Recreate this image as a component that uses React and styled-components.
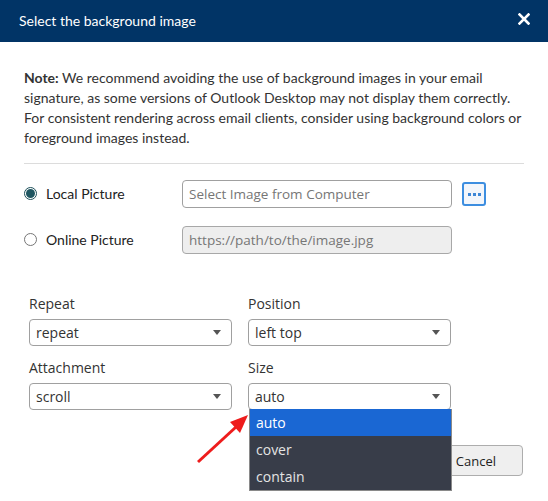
import React from "react";
import styled, { createGlobalStyle } from "styled-components";

const Global = createGlobalStyle`
  html, body { margin: 0; padding: 0; background: #ffffff; }
  body { font-family: Lato, "Noto Sans", sans-serif; color: #333; }
  * { box-sizing: border-box; }
`;

const UI = `"Open Sans", "Noto Sans", sans-serif`;

const Dialog = styled.div`
  position: relative;
  width: 548px;
  height: 501px;
  overflow: hidden;
  background: #fff;
`;

const Header = styled.div`
  height: 42px;
  background: #013466;
  display: flex;
  align-items: center;
  justify-content: space-between;
  padding: 0 17px 0 19px;
  color: #fff;
`;

const Title = styled.div`
  font-family: Lato, sans-serif;
  font-size: 14px;
  margin-top: -2px;
`;

const Close = styled.button`
  border: 0;
  background: transparent;
  padding: 0;
  width: 14px;
  height: 14px;
  display: flex;
  align-items: center;
  justify-content: center;
  margin-top: -4px;
`;

const Body = styled.div`
  padding: 26px 24px 0 24px;
`;

const Note = styled.p`
  margin: 0;
  font-size: 14px;
  line-height: 20px;
  color: #333;
  b { font-weight: 700; }
`;

const Divider = styled.hr`
  margin: 15px 0 0 0;
  border: 0;
  border-top: 1px solid #dcdcdc;
`;

const Sources = styled.div`
  padding-top: 16px;
  display: grid;
  grid-template-columns: 148px 270px 24px;
  column-gap: 10px;
  row-gap: 18px;
  align-items: center;
`;

const RadioLabel = styled.label`
  display: flex;
  align-items: center;
  gap: 9px;
  font-family: Lato, sans-serif;
  font-size: 14px;
  color: #222;
  margin-top: -1px;
`;

const Radio = styled.span`
  width: 13px;
  height: 13px;
  border-radius: 50%;
  border: 1px solid ${(p) => (p.$checked ? "#1d4f5a" : "#767676")};
  background: #fff;
  display: flex;
  align-items: center;
  justify-content: center;
  &::after {
    content: "";
    display: ${(p) => (p.$checked ? "block" : "none")};
    width: 9px;
    height: 9px;
    border-radius: 50%;
    background: #1f5661;
  }
`;

const TextInput = styled.div`
  height: 28px;
  border: 1px solid ${(p) => (p.$disabled ? "#a8a8a8" : "#a0a0a0")};
  border-radius: 4px;
  background: ${(p) => (p.$disabled ? "#eeeeee" : "#fff")};
  display: flex;
  align-items: center;
  padding: 0 6px;
  font-family: ${UI};
  font-size: 13.5px;
  color: #767676;
  white-space: nowrap;
`;

const DotsButton = styled.button`
  width: 24px;
  height: 24px;
  padding: 0;
  border: 2px solid #3d8ee0;
  border-radius: 3px;
  background: #f3f6fb;
  display: flex;
  align-items: center;
  justify-content: center;
  gap: 2px;
  span {
    width: 3px;
    height: 3px;
    background: #3d86d6;
  }
`;

const Options = styled.div`
  padding: 40px 0 0 5px;
  display: grid;
  grid-template-columns: 203px 203px;
  column-gap: 16px;
  row-gap: 12px;
`;

const Field = styled.div`
  display: flex;
  flex-direction: column;
  gap: 5px;
  position: relative;
`;

const FieldLabel = styled.div`
  font-family: ${UI};
  font-size: 14px;
  line-height: 20px;
  color: #333;
`;

const SelectBox = styled.div`
  position: relative;
  height: 27px;
  border: 1px solid #a0a0a0;
  border-radius: 4px;
  background: #fff;
  display: flex;
  align-items: center;
  justify-content: space-between;
  padding: 0 10px 0 6px;
  font-family: ${UI};
  font-size: 14px;
  color: #333;
`;

const Caret = styled.span`
  width: 0;
  height: 0;
  border-left: 4px solid transparent;
  border-right: 4px solid transparent;
  border-top: 5px solid #555;
`;

const Menu = styled.ul`
  position: absolute;
  top: 100%;
  left: 0;
  width: 203px;
  margin: 0;
  padding: 0;
  list-style: none;
  background: #383d49;
  border: 1px solid #8a8a8a;
  border-top: 0;
  z-index: 5;
`;

const MenuItem = styled.li`
  height: 27px;
  display: flex;
  align-items: center;
  padding: 0 6px;
  font-family: ${UI};
  font-size: 14px;
  color: ${(p) => (p.$active ? "#ffffff" : "#e4e4e4")};
  background: ${(p) => (p.$active ? "#1a67d3" : "transparent")};
`;

const Footer = styled.div`
  display: flex;
  justify-content: flex-end;
  gap: 10px;
  padding: 35px 1px 0 0;
`;

const Button = styled.button`
  height: 31px;
  padding: 0 26px;
  border: 1px solid #adadad;
  border-radius: 4px;
  background: #efefef;
  font-family: ${UI};
  font-size: 13px;
  color: #222;
`;

const Arrow = styled.svg`
  position: absolute;
  left: 0;
  top: 0;
  pointer-events: none;
  z-index: 10;
`;

const Select = ({ label, value, open, items }) => (
  <Field>
    <FieldLabel>{label}</FieldLabel>
    <SelectBox>
      {value}
      <Caret />
      {open && (
        <Menu>
          {items.map((it) => (
            <MenuItem key={it} $active={it === value}>
              {it}
            </MenuItem>
          ))}
        </Menu>
      )}
    </SelectBox>
  </Field>
);

export default function App() {
  return (
    <>
      <Global />
      <Dialog>
        <Header>
          <Title>Select the background image</Title>
          <Close aria-label="close">
            <svg width="12" height="12" viewBox="0 0 12 12">
              <path d="M1.5 1.5 L10.5 10.5 M10.5 1.5 L1.5 10.5" stroke="#fff" strokeWidth="2.6" strokeLinecap="square" />
            </svg>
          </Close>
        </Header>
        <Body>
          <Note>
            <b>Note:</b> We recommend avoiding the use of background images in your email
            signature, as some versions of Outlook Desktop may not display them correctly.
            For consistent rendering across email clients, consider using background colors or
            foreground images instead.
          </Note>
          <Divider />
          <Sources>
            <RadioLabel>
              <Radio $checked />
              Local Picture
            </RadioLabel>
            <TextInput>Select Image from Computer</TextInput>
            <DotsButton>
              <span />
              <span />
              <span />
            </DotsButton>
            <RadioLabel>
              <Radio />
              Online Picture
            </RadioLabel>
            <TextInput $disabled>https://path/to/the/image.jpg</TextInput>
            <span />
          </Sources>
          <Options>
            <Select label="Repeat" value="repeat" />
            <Select label="Position" value="left top" />
            <Select label="Attachment" value="scroll" />
            <Select label="Size" value="auto" open items={["auto", "cover", "contain"]} />
          </Options>
          <Footer>
            <Button>OK</Button>
            <Button>Cancel</Button>
          </Footer>
        </Body>
        <Arrow width="548" height="501" viewBox="0 0 548 501">
          <line x1="198" y1="462" x2="236" y2="427" stroke="#ee1c1c" strokeWidth="3" />
          <polygon points="248,415 230,422 240,433" fill="#ee1c1c" />
        </Arrow>
      </Dialog>
    </>
  );
}
